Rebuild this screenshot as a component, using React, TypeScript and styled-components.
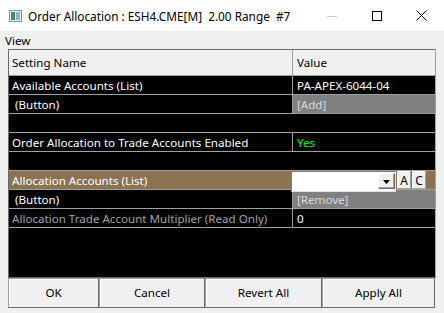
import styled, { createGlobalStyle } from "styled-components";

const GlobalStyle = createGlobalStyle`
  html, body {
    margin: 0;
    padding: 0;
    background: #f0f0f0;
  }
  * {
    box-sizing: border-box;
  }
`;

const FONT = `"Segoe UI", "Noto Sans", "Liberation Sans", sans-serif`;

type Row = {
  name: string;
  value?: string;
  kind?: "plain" | "button" | "empty" | "selected" | "readonly";
  valueColor?: string;
};

const rows: Row[] = [
  { name: "Available Accounts (List)", value: "PA-APEX-6044-04" },
  { name: " (Button)", value: "[Add]", kind: "button" },
  { name: "", kind: "empty" },
  { name: "Order Allocation to Trade Accounts Enabled", value: "Yes", valueColor: "#00ff00" },
  { name: "", kind: "empty" },
  { name: "Allocation Accounts (List)", kind: "selected" },
  { name: " (Button)", value: "[Remove]", kind: "button" },
  { name: "Allocation Trade Account Multiplier (Read Only)", value: "0", kind: "readonly" },
];

const buttons = [
  { label: "OK", width: 91 },
  { label: "Cancel", width: 106 },
  { label: "Revert All", width: 117 },
  { label: "Apply All", width: 113 },
];

export default function App() {
  return (
    <>
      <GlobalStyle />
      <Window>
        <TitleBar>
          <AppIcon />
          <Title>Order Allocation : ESH4.CME[M]&nbsp; 2.00 Range&nbsp; #7</Title>
          <Controls>
            <Control>
              <svg width="10" height="10" viewBox="0 0 10 10">
                <path d="M0 5.5h10" stroke="#c8c8c8" strokeWidth="1" />
              </svg>
            </Control>
            <Control>
              <svg width="10" height="10" viewBox="0 0 10 10">
                <rect x="0.5" y="0.5" width="9" height="9" fill="none" stroke="#000" />
              </svg>
            </Control>
            <Control>
              <svg width="11" height="11" viewBox="0 0 11 11">
                <path d="M0.5 0.5l10 10M10.5 0.5l-10 10" stroke="#000" strokeWidth="1" />
              </svg>
            </Control>
          </Controls>
        </TitleBar>

        <MenuBar>
          <MenuItem>View</MenuItem>
        </MenuBar>

        <Grid>
          <HeaderRow>
            <NameCell>Setting Name</NameCell>
            <ValueCell $divider>Value</ValueCell>
          </HeaderRow>
          {rows.map((r, i) => (
            <DataRow key={i} $kind={r.kind ?? "plain"}>
              <NameCell>{r.name}</NameCell>
              {r.kind === "empty" ? null : r.kind === "selected" ? (
                <ValueCell>
                  <Editor>
                    <ComboBox>
                      <DropButton>
                        <svg width="7" height="4" viewBox="0 0 7 4">
                          <path d="M0 0h7L3.5 4z" fill="#000" />
                        </svg>
                      </DropButton>
                    </ComboBox>
                    <SmallButton>A</SmallButton>
                    <SmallButton>C</SmallButton>
                  </Editor>
                </ValueCell>
              ) : (
                <ValueCell $divider $kind={r.kind ?? "plain"} style={r.valueColor ? { color: r.valueColor } : undefined}>
                  {r.value}
                </ValueCell>
              )}
            </DataRow>
          ))}
        </Grid>

        <ButtonBar>
          {buttons.map((b) => (
            <DialogButton key={b.label} style={{ width: b.width }}>
              {b.label}
            </DialogButton>
          ))}
        </ButtonBar>
      </Window>
    </>
  );
}

function AppIcon() {
  return (
    <IconWrap>
      <svg width="13" height="12" viewBox="0 0 13 12">
        <rect x="0.5" y="0.5" width="12" height="11" fill="#e8ecef" stroke="#8a96a0" />
        <rect x="2" y="2" width="4" height="8" fill="#3f8f7a" />
        <rect x="7" y="2" width="4" height="8" fill="#8fb5cf" />
      </svg>
    </IconWrap>
  );
}

const Window = styled.div`
  width: 444px;
  height: 313px;
  display: flex;
  flex-direction: column;
  background: #f0f0f0;
  font-family: ${FONT};
  font-size: 11.6px;
  color: #000;
`;

const TitleBar = styled.div`
  height: 31px;
  background: #ffffff;
  display: flex;
  align-items: center;
  flex-shrink: 0;
`;

const IconWrap = styled.div`
  width: 28px;
  display: flex;
  justify-content: center;
  padding-left: 2px;
  padding-top: 1px;
`;

const Title = styled.div`
  flex: 1;
  font-size: 11.8px;
  white-space: nowrap;
  padding-top: 1px;
`;

const Controls = styled.div`
  display: flex;
  height: 100%;
`;

const Control = styled.div`
  width: 45px;
  display: flex;
  align-items: center;
  justify-content: center;
`;

const MenuBar = styled.div`
  height: 18px;
  display: flex;
  align-items: center;
  flex-shrink: 0;
`;

const MenuItem = styled.span`
  padding-left: 5px;
`;

const Grid = styled.div`
  flex: 1;
  margin: 0 8px;
  border: 1px solid #696969;
  border-right-color: #a0a0a0;
  background: #000;
  display: flex;
  flex-direction: column;
`;

const HeaderRow = styled.div`
  height: 26px;
  display: flex;
  background: #f0f0f0;
  border-bottom: 1px solid #a0a0a0;
  color: #000;
  align-items: stretch;
`;

const rowBg = {
  plain: "#000",
  button: "#000",
  empty: "#000",
  selected: "#8b7352",
  readonly: "#000",
};

const DataRow = styled.div<{ $kind: keyof typeof rowBg }>`
  height: 19px;
  display: flex;
  position: relative;
  background: ${(p) => rowBg[p.$kind]};
  border-bottom: 1px solid #a0a0a0;
  color: ${(p) => (p.$kind === "readonly" ? "#a0a0a0" : "#fff")};
`;

const NameCell = styled.div`
  width: 283px;
  padding-left: 3px;
  display: flex;
  align-items: center;
  white-space: pre;
  overflow: hidden;
`;

const ValueCell = styled.div<{ $divider?: boolean; $kind?: string }>`
  flex: 1;
  display: flex;
  align-items: center;
  padding-left: 4px;
  white-space: pre;
  position: relative;
  border-left: ${(p) => (p.$divider ? "1px solid #a0a0a0" : "1px solid transparent")};
  background: ${(p) => (p.$kind === "button" ? "#808080" : "transparent")};
  color: ${(p) => (p.$kind === "button" ? "#dadada" : p.$kind === "readonly" ? "#fff" : "inherit")};
`;

const Editor = styled.div`
  position: absolute;
  left: -2px;
  top: 0;
  display: flex;
  gap: 1px;
  z-index: 2;
`;

const ComboBox = styled.div`
  width: 105px;
  height: 21px;
  background: #fff;
  border: 1px solid #7a7a7a;
  border-right-color: #e0e0e0;
  border-bottom-color: #e0e0e0;
  display: flex;
  justify-content: flex-end;
  align-items: stretch;
  padding: 1px 1px 3px 0;
`;

const DropButton = styled.div`
  width: 16px;
  background: #f0f0f0;
  border: 1px solid #a0a0a0;
  border-top-color: #fff;
  border-left-color: #fff;
  box-shadow: 1px 1px 0 #696969;
  display: flex;
  align-items: center;
  justify-content: center;
  padding-top: 2px;
`;

const SmallButton = styled.div`
  width: 14px;
  height: 18px;
  background: #f0f0f0;
  border: 1px solid #a0a0a0;
  border-top-color: #fff;
  border-left-color: #fff;
  color: #000;
  font-size: 12px;
  display: flex;
  align-items: center;
  justify-content: center;
`;

const ButtonBar = styled.div`
  height: 30px;
  margin: 0 8px 5px 8px;
  display: flex;
  flex-shrink: 0;
`;

const DialogButton = styled.div`
  height: 30px;
  background: #f0f0f0;
  border: 1px solid #a0a0a0;
  border-right-color: #696969;
  border-bottom-color: #696969;
  box-shadow: inset 1px 1px 0 #fff;
  display: flex;
  align-items: center;
  justify-content: center;
  color: #000;
  padding-bottom: 1px;
`;
